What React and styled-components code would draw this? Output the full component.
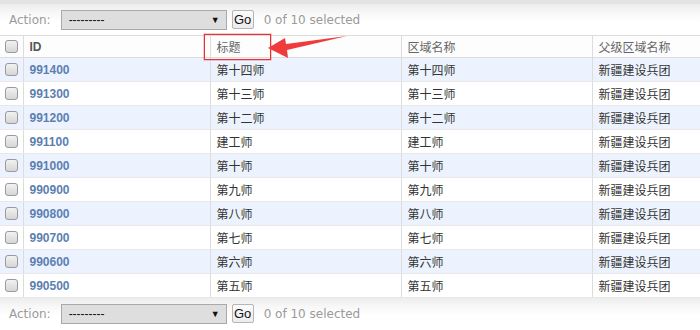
import React from "react";
import styled, { createGlobalStyle } from "styled-components";

const Global = createGlobalStyle`
  html, body { margin: 0; padding: 0; background: #fff; }
  body { width: 700px; height: 330px; overflow: hidden; font-family: "DejaVu Sans", sans-serif; }
`;

const Page = styled.div`
  position: relative;
  width: 700px;
  height: 330px;
  overflow: hidden;
`;

const TopEdge = styled.div`
  height: 4px;
  background: #e3e3e3;
`;

const ActionBar = styled.div`
  display: flex;
  align-items: center;
  height: 31px;
  padding-left: 9px;
  background: linear-gradient(to bottom, #ececec 0px, #f7f7f7 8px, #ffffff 18px);
`;

const Label = styled.span`
  font-family: "DejaVu Sans", sans-serif;
  font-size: 12px;
  color: #9a9a9a;
  margin-right: 10px;
`;

const SelectBox = styled.div`
  box-sizing: border-box;
  display: flex;
  align-items: center;
  justify-content: space-between;
  width: 166px;
  height: 20px;
  padding: 0 6px 0 7px;
  border: 1px solid #a9a9a9;
  background: #dedede;
  font-family: "Liberation Sans", sans-serif;
  font-size: 12px;
  color: #111;
`;

const Arrow = styled.span`
  font-size: 9px;
  color: #111;
`;

const GoButton = styled.button`
  box-sizing: border-box;
  margin-left: 5px;
  width: 22px;
  height: 19px;
  padding: 0;
  border: 1px solid #b5b5b5;
  border-radius: 2px;
  background: linear-gradient(#fbfbfb, #ececec);
  font-family: "Liberation Sans", sans-serif;
  font-size: 13px;
  color: #111;
`;

const Counter = styled.span`
  margin-left: 10px;
  font-family: "DejaVu Sans", sans-serif;
  font-size: 12px;
  color: #9a9a9a;
`;

const Table = styled.table`
  border-collapse: collapse;
  table-layout: fixed;
  width: 792px;
  font-family: "Liberation Sans", "Noto Sans CJK SC", sans-serif;
  font-size: 12px;
`;

const HeadCell = styled.th`
  height: 21px;
  padding: 0 6px;
  text-align: left;
  vertical-align: middle;
  font-weight: ${(p) => (p.$sorted ? 700 : 400)};
  color: ${(p) => (p.$sorted ? "#555" : "#666")};
  background: #fdfdfd;
  border-top: 1px solid #dcdcdc;
  border-bottom: 1px solid #dcdcdc;
  border-left: ${(p) => (p.$first ? "none" : "1px solid #dcdcdc")};
  white-space: nowrap;
`;

const Row = styled.tr`
  background: ${(p) => (p.$odd ? "#edf3fe" : "#ffffff")};
`;

const Cell = styled.td`
  height: 23px;
  padding: 0 6px;
  vertical-align: middle;
  color: #333;
  border-bottom: 1px solid #e8e8e8;
  border-left: ${(p) => (p.$first ? "none" : "1px solid #dcdcdc")};
  white-space: nowrap;
`;

const CheckCell = styled(Cell)`
  padding: 0 0 0 5px;
`;

const CheckHead = styled(HeadCell)`
  padding: 0 0 0 5px;
`;

const Check = styled.span`
  display: block;
  box-sizing: border-box;
  width: 13px;
  height: 13px;
  border: 1px solid #9a9a9a;
  border-radius: 3px;
  background: linear-gradient(#f2f2f2, #d6d6d6);
`;

const IdLink = styled.a`
  font-family: "Liberation Sans", sans-serif;
  font-weight: 700;
  color: #5b80b2;
  text-decoration: none;
`;

const Highlight = styled.div`
  position: absolute;
  left: 204px;
  top: 34px;
  width: 67px;
  height: 26px;
  box-sizing: border-box;
  border: 1px solid #ee2f2f;
  box-shadow: 0 0 0 0.5px rgba(238, 47, 47, 0.5);
`;

const ArrowSvg = styled.svg`
  position: absolute;
  left: 265px;
  top: 33px;
`;

const rows = [
  ["991400", "第十四师", "第十四师"],
  ["991300", "第十三师", "第十三师"],
  ["991200", "第十二师", "第十二师"],
  ["991100", "建工师", "建工师"],
  ["991000", "第十师", "第十师"],
  ["990900", "第九师", "第九师"],
  ["990800", "第八师", "第八师"],
  ["990700", "第七师", "第七师"],
  ["990600", "第六师", "第六师"],
  ["990500", "第五师", "第五师"],
];

function Actions() {
  return (
    <ActionBar>
      <Label>Action:</Label>
      <SelectBox>
        <span>---------</span>
        <Arrow>▼</Arrow>
      </SelectBox>
      <GoButton>Go</GoButton>
      <Counter>0 of 10 selected</Counter>
    </ActionBar>
  );
}

export default function App() {
  return (
    <Page>
      <Global />
      <TopEdge />
      <Actions />
      <Table>
        <colgroup>
          <col style={{ width: 23 }} />
          <col style={{ width: 187 }} />
          <col style={{ width: 191 }} />
          <col style={{ width: 191 }} />
          <col style={{ width: 200 }} />
        </colgroup>
        <thead>
          <tr>
            <CheckHead $first>
              <Check />
            </CheckHead>
            <HeadCell $sorted>ID</HeadCell>
            <HeadCell>标题</HeadCell>
            <HeadCell>区域名称</HeadCell>
            <HeadCell>父级区域名称</HeadCell>
          </tr>
        </thead>
        <tbody>
          {rows.map(([id, title, name], i) => (
            <Row key={id} $odd={i % 2 === 0}>
              <CheckCell $first>
                <Check />
              </CheckCell>
              <Cell>
                <IdLink href="#">{id}</IdLink>
              </Cell>
              <Cell>{title}</Cell>
              <Cell>{name}</Cell>
              <Cell>新疆建设兵团</Cell>
            </Row>
          ))}
        </tbody>
      </Table>
      <Actions />
      <Highlight />
      <ArrowSvg width="86" height="28" viewBox="0 0 86 28">
        <polygon
          points="3,15 20,5 21,11 82,3 22,17 23,25"
          fill="#ef3b3b"
        />
      </ArrowSvg>
    </Page>
  );
}
